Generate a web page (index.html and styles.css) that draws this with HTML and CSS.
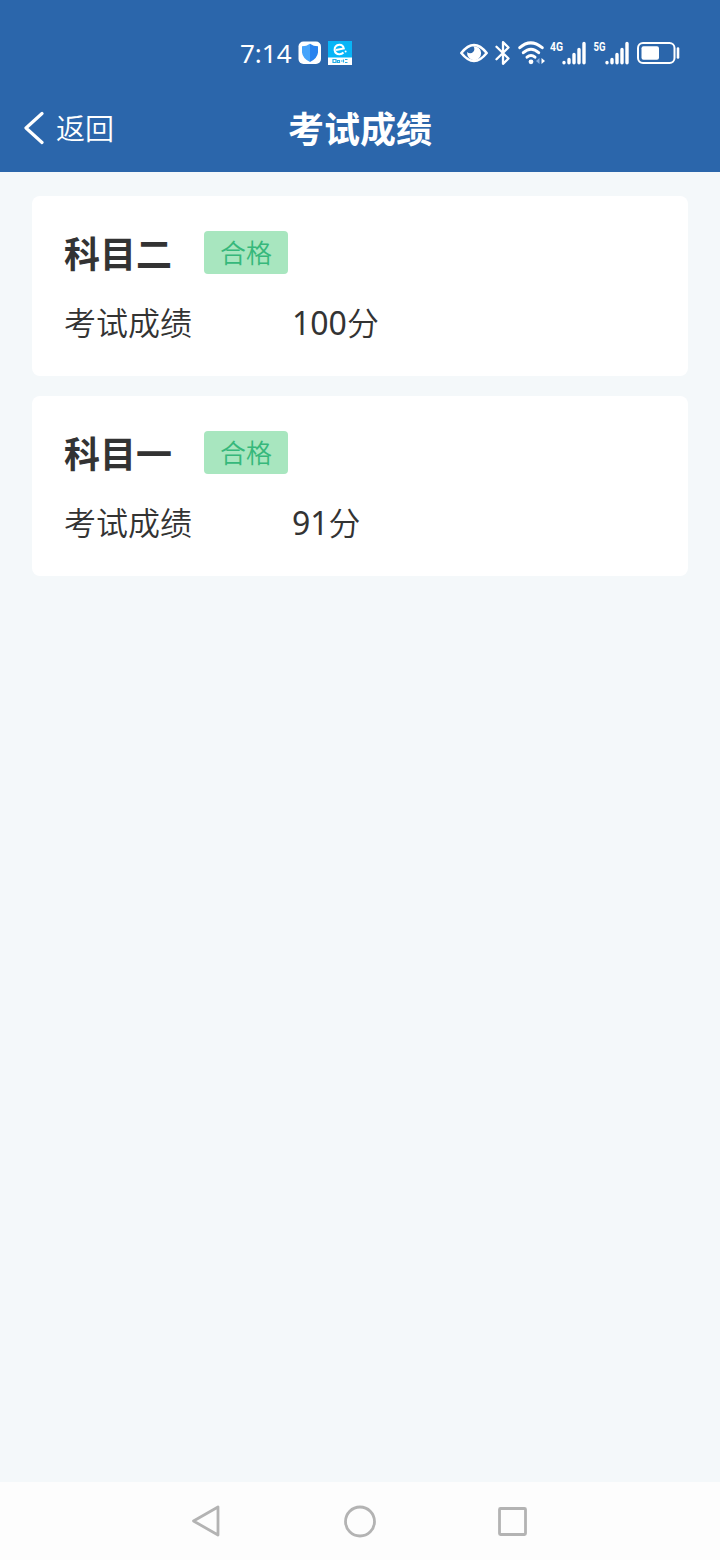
FILE: index.html
```
<!DOCTYPE html>
<html lang="zh-CN">
<head>
<meta charset="utf-8">
<title>考试成绩</title>
<link rel="stylesheet" href="styles.css">
</head>
<body>
<div class="screen">
  <header class="top">
    <div class="status">
      <div class="status-left">
        <span class="clock">7:14</span>
        <svg class="app-icon" width="24" height="24" viewBox="0 0 24 24">
          <defs><linearGradient id="shield" x1="0" y1="0" x2="1" y2="0"><stop offset=".5" stop-color="#45a4fb"/><stop offset=".5" stop-color="#2a83ee"/></linearGradient></defs>
          <rect x=".5" y=".5" width="22.500" height="22.500" rx="5" fill="#fff"/>
          <path d="M12 2.800 Q15.500 5.300 20 5.300 V11.500 Q19.300 17.500 12 21 Q4.700 17.500 4 11.500 V5.300 Q8.500 5.300 12 2.800Z" fill="url(#shield)"/>
        </svg>
        <svg class="app-icon" width="24" height="24" viewBox="0 0 24 24">
          <rect width="24" height="24" fill="#fff"/>
          <rect width="24" height="16.500" fill="#08b5f7"/>
          <path d="M8 9 L15.800 7.500 Q15 3.500 11.300 3.700 Q6.500 4.200 6.600 9 Q7.300 13.500 11.800 13.300 Q13.800 13.200 15.500 11.500" fill="none" stroke="#fff" stroke-width="2"/>
          <circle cx="17.600" cy="10.500" r="1" fill="#fff"/>
          <path d="M5 18.500h3v3H5zM9.500 19.500h2v2h-2zM13 20h1.500M15.500 18.500v3M17 18.500h2.500M17 21.500h2.500" fill="none" stroke="#27aee5" stroke-width="1.200"/>
        </svg>
      </div>
      <div class="status-right">
        <svg width="28" height="24" viewBox="0 0 28 24">
          <path d="M1.300 12 Q14 -4 26.700 12 Q14 28 1.300 12Z" fill="none" stroke="#fff" stroke-width="2.500" stroke-linejoin="round"/>
          <path d="M13.200 5.200 A7 7 0 1 1 7.200 11 A3.700 3.700 0 0 0 13.200 5.200Z" fill="#fff"/>
        </svg>
        <svg class="bluetooth" width="16" height="26" viewBox="0 0 16 26">
          <path d="M1.500 6.800 L13.500 18.500 L8 23.800 V2.200 L13.500 7.500 L1.500 19.200" fill="none" stroke="#fff" stroke-width="2.300" stroke-linejoin="round" stroke-linecap="round"/>
        </svg>
        <svg class="wifi" width="28" height="24" viewBox="0 0 28 24">
          <g fill="none" stroke="#fff" stroke-width="3" stroke-linecap="round">
            <path d="M1.800 6.700 Q12.500 -3 24.200 6.700"/>
            <path d="M5.300 11.700 Q13 4.800 20.700 11.700"/>
            <path d="M9 16.200 Q13 12.700 17 16.200"/>
          </g>
          <circle cx="13" cy="20.800" r="2.400" fill="#fff"/>
          <path d="M21.500 17v6l-3.500-3z" fill="#86aee0"/>
          <path d="M23.500 17v6l3.500-3z" fill="#fff"/>
        </svg>
        <svg class="signal" width="38" height="26" viewBox="0 0 38 26">
          <text class="net" x="0" y="11" textLength="13" lengthAdjust="spacingAndGlyphs">4G</text>
          <path d="M14 22.500v.2M19 19.500v3.200M24 14.500v8.200M29 9.500v13.200M34 3.500v19.200" stroke="#fff" stroke-width="3.400" stroke-linecap="round"/>
        </svg>
        <svg class="signal second" width="38" height="26" viewBox="0 0 38 26">
          <text class="net" x="0.500" y="11" textLength="12" lengthAdjust="spacingAndGlyphs">5G</text>
          <path d="M14 22.500v.2M19 19.500v3.200M24 14.500v8.200M29 9.500v13.200M34 3.500v19.200" stroke="#fff" stroke-width="3.400" stroke-linecap="round"/>
        </svg>
        <svg class="battery" width="43" height="24" viewBox="0 0 43 24">
          <rect x="1" y="2" width="36.500" height="20" rx="5" fill="none" stroke="#fff" stroke-width="2"/>
          <rect x="4.500" y="5.200" width="17.500" height="13.600" rx="2" fill="#fff"/>
          <path d="M41 7.500v9" stroke="#fff" stroke-width="2.600" stroke-linecap="round"/>
        </svg>
      </div>
    </div>
    <nav class="titlebar">
      <a class="back">
        <svg width="22" height="36" viewBox="0 0 22 36"><path d="M18 3.500 L2 18 L18 32.500" fill="none" stroke="#fff" stroke-width="3.200" stroke-linecap="round" stroke-linejoin="round"/></svg>
        <span class="back-text">返回</span>
      </a>
      <h1 class="title">考试成绩</h1>
    </nav>
  </header>
  <main class="content">
    <section class="card">
      <div class="card-head"><h2 class="subject">科目二</h2><span class="badge">合格</span></div>
      <div class="row"><span class="label">考试成绩</span><span class="score"><span class="digits">100</span>分</span></div>
    </section>
    <section class="card">
      <div class="card-head"><h2 class="subject">科目一</h2><span class="badge">合格</span></div>
      <div class="row"><span class="label">考试成绩</span><span class="score"><span class="digits">91</span>分</span></div>
    </section>
  </main>
  <footer class="navbar">
    <svg width="34" height="34" viewBox="0 0 34 34"><path d="M28 3 V31 L3.500 17Z"/></svg>
    <svg width="34" height="34" viewBox="0 0 34 34"><circle cx="17" cy="17.500" r="14.500"/></svg>
    <svg width="34" height="34" viewBox="0 0 34 34"><rect x="3.500" y="4.500" width="26" height="26" rx="1"/></svg>
  </footer>
</div>
</body>
</html>
```
FILE: styles.css
```
* { box-sizing: border-box; }
body {
  margin: 0;
  font-family: "Noto Sans", "Noto Sans CJK SC", sans-serif;
  color: #333;
}
svg { display: block; flex: none; }
.screen {
  width: 720px;
  height: 1560px;
  display: flex;
  flex-direction: column;
  background: #f4f8fa;
}
.top {
  height: 172px;
  background: #2b66ab;
  color: #fff;
}
.status {
  height: 84px;
  padding: 22px 40px 0 240px;
  display: flex;
  justify-content: space-between;
  align-items: center;
}
.status-left, .status-right { display: flex; align-items: center; }
.clock { width: 52px; font-size: 26px; line-height: 36px; white-space: nowrap; }
.app-icon { margin-left: 6px; }
.bluetooth { margin-left: 7px; }
.wifi { margin-left: 7px; }
.signal { margin-left: 4px; }
.second { margin-left: 5px; }
.battery { margin-left: 6px; }
.net { font: bold 12px Roboto, sans-serif; fill: #fff; }
.titlebar {
  height: 88px;
  padding: 0 24px;
  display: grid;
  grid-template-columns: 1fr auto 1fr;
  align-items: center;
}
.back { display: flex; align-items: center; gap: 10px; }
.back-text { font-size: 29px; line-height: 40px; font-weight: 350; padding-top: 2px; }
.title { margin: 0; padding-top: 4px; font-size: 36px; line-height: 48px; font-weight: 700; }
.content {
  flex: 1;
  padding: 24px 32px;
  display: flex;
  flex-direction: column;
  gap: 20px;
}
.card {
  height: 180px;
  padding: 34px 32px;
  background: #fff;
  border-radius: 8px;
}
.card-head { display: flex; align-items: center; gap: 32px; height: 44px; }
.subject { margin: 0; padding-top: 6px; font-size: 36px; line-height: 44px; font-weight: 700; }
.badge {
  width: 84px;
  height: 43px;
  padding-top: 1px;
  border-radius: 4px;
  background: #a8e6bf;
  color: #36b87b;
  font-size: 26px;
  font-weight: 350;
  line-height: 43px;
  text-align: center;
}
.row { display: flex; height: 48px; margin-top: 25px; font-size: 32px; line-height: 48px; font-weight: 350; }
.label { width: 228px; }
.digits { font-weight: 400; }
.navbar {
  height: 78px;
  padding: 0 190px;
  display: flex;
  justify-content: space-between;
  align-items: center;
  background: #fdfdfd;
}
.navbar svg { fill: none; stroke: #b3b3b3; stroke-width: 2.800; stroke-linejoin: round; }
```
